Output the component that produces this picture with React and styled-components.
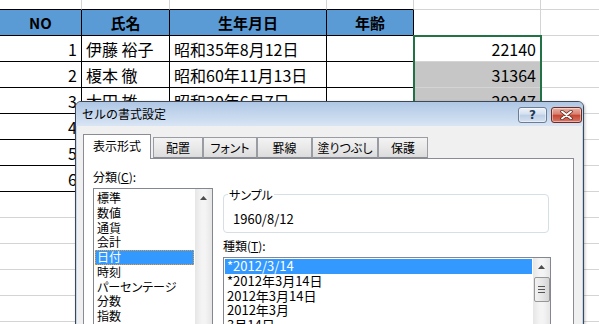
import React from "react";
import styled, { createGlobalStyle } from "styled-components";

const GlobalStyle = createGlobalStyle`
  html, body { margin: 0; padding: 0; background: #fff; }
  body { font-family: "Noto Sans CJK JP", "Noto Sans", sans-serif; }
`;

const Screen = styled.div`
  position: relative;
  width: 599px;
  height: 324px;
  overflow: hidden;
  background: #fff;
`;

const Sheet = styled.div`
  display: flex;
  flex-direction: column;
`;

const Row = styled.div`
  display: flex;
  flex: none;
  height: ${(p) => p.$h || 26}px;
`;

const Cell = styled.div`
  box-sizing: border-box;
  flex: none;
  width: ${(p) => p.$w}px;
  height: 100%;
  border-right: 1px solid ${(p) => p.$rc || "#d4d4d4"};
  border-bottom: 1px solid ${(p) => p.$bc || "#d4d4d4"};
  background: ${(p) => p.$bg || "#fff"};
  display: flex;
  align-items: center;
  justify-content: ${(p) =>
    p.$align === "right" ? "flex-end" : p.$align === "center" ? "center" : "flex-start"};
  padding: 0 4px;
  font-size: ${(p) => (p.$head ? 15 : 16)}px;
  font-weight: ${(p) => (p.$head ? 700 : 400)};
  color: #000;
  white-space: nowrap;
  overflow: visible;
`;

const Selection = styled.div`
  position: absolute;
  left: 413px;
  top: 35px;
  width: 129px;
  height: 158px;
  box-sizing: border-box;
  border: 2px solid #217346;
  pointer-events: none;
`;

/* dialog */

const Dialog = styled.div`
  position: absolute;
  left: 75px;
  top: 101px;
  width: 509px;
  height: 262px;
  box-sizing: border-box;
  border: 1px solid #3d4856;
  border-radius: 6px 6px 0 0;
  background: #c3d6ec;
  display: flex;
  flex-direction: column;
  box-shadow: 1px 1px 3px rgba(0, 0, 0, 0.25);
`;

const TitleBar = styled.div`
  flex: none;
  height: 24px;
  display: flex;
  align-items: flex-start;
  padding: 0 1px 0 6px;
  border-radius: 5px 5px 0 0;
  background: linear-gradient(#afc7e5, #d8e5f4);
`;

const Title = styled.div`
  flex: 1;
  font-size: 12px;
  line-height: 24px;
  color: #000;
`;

const TitleButton = styled.div`
  box-sizing: border-box;
  margin-top: 5px;
  margin-left: ${(p) => (p.$close ? 4 : 0)}px;
  width: ${(p) => (p.$close ? 31 : 29)}px;
  height: 16px;
  border-radius: 3px;
  border: 1px solid ${(p) => (p.$close ? "#6e2b22" : "#6b7c93")};
  background: ${(p) =>
    p.$close
      ? "linear-gradient(#eab0a3, #d9806f 45%, #c4442f 50%, #d7786a)"
      : "linear-gradient(#eef3fa, #d3e0ef 45%, #bccee6 50%, #d5e1f0)"};
  box-shadow: inset 0 0 0 1px rgba(255, 255, 255, 0.45);
  display: flex;
  align-items: center;
  justify-content: center;
  font-family: "DejaVu Sans", sans-serif;
  font-weight: 700;
  font-size: 12px;
  color: #243a56;
`;

const Body = styled.div`
  flex: 1;
  margin: 0 1px;
  background: #f0f0f0;
  padding: 8px 8px 0 6px;
  display: flex;
  flex-direction: column;
  font-size: 12px;
  font-feature-settings: "palt";
  color: #000;
`;

const Tabs = styled.div`
  display: flex;
  align-items: flex-end;
  height: 24px;
  flex: none;
  position: relative;
  z-index: 1;
`;

const Tab = styled.div`
  box-sizing: border-box;
  flex: none;
  width: ${(p) => p.$w}px;
  height: ${(p) => (p.$active ? 25 : 21)}px;
  margin-bottom: ${(p) => (p.$active ? -1 : 0)}px;
  margin-right: ${(p) => (p.$active ? 2 : 0)}px;
  border: 1px solid ${(p) => (p.$active ? "#898c95" : "#9a9ca3")};
  border-bottom: ${(p) => (p.$active ? "none" : "1px solid #898c95")};
  background: ${(p) => (p.$active ? "#fff" : "linear-gradient(#f3f3f3, #e9e9e9 50%, #dcdcdc)")};
  display: flex;
  align-items: center;
  justify-content: center;
  padding-bottom: ${(p) => (p.$active ? 3 : 0)}px;
  font-size: 12px;
  white-space: nowrap;
`;

const Panel = styled.div`
  flex: 1;
  background: #fff;
  border: 1px solid #898c95;
  padding: 10px 0 0 9px;
  display: flex;
  gap: 10px;
`;

const Column = styled.div`
  display: flex;
  flex-direction: column;
  width: ${(p) => p.$w}px;
`;

const Label = styled.div`
  line-height: 15px;
  height: 15px;
  margin-top: ${(p) => p.$mt || 0}px;
`;

const Sample = styled.fieldset`
  margin: 18px 2px 0 0;
  padding: 0 4px 6px 9px;
  border: 1px solid #d5dfe5;
  border-radius: 4px;
  min-width: 0;
`;

const Legend = styled.legend`
  padding: 0 1px;
  margin-left: -5px;
  line-height: 15px;
`;

const SampleValue = styled.div`
  line-height: 15px;
  margin-top: 9px;
  font-size: 13px;
`;

const ListBox = styled.div`
  box-sizing: border-box;
  margin-top: 4px;
  height: 140px;
  border: 1px solid #828790;
  background: #fff;
  display: flex;
`;

const Items = styled.div`
  flex: 1;
  padding-top: ${(p) => p.$pt}px;
  font-size: ${(p) => p.$fs || 12}px;
`;

const Item = styled.div`
  margin: 0 1px;
  padding-left: 2px;
  height: 14.75px;
  line-height: 14.75px;
  white-space: nowrap;
  box-sizing: border-box;
  background: ${(p) => (p.$selected ? "#3399ff" : "transparent")};
  color: ${(p) => (p.$selected ? "#fff" : "#000")};
  outline: ${(p) => (p.$focus ? "1px dotted #ff9a1a" : "none")};
  outline-offset: -1px;
`;

const ScrollBar = styled.div`
  flex: none;
  width: 17px;
  background: linear-gradient(90deg, #e6e6e6, #f4f4f4 40%, #f4f4f4 60%, #e6e6e6);
  display: flex;
  flex-direction: column;
  align-items: center;
`;

const Arrow = styled.div`
  height: 17px;
  display: flex;
  align-items: center;
  justify-content: center;
`;

const Thumb = styled.div`
  box-sizing: border-box;
  margin-top: 2px;
  width: 16px;
  height: 25px;
  border: 1px solid #979797;
  border-radius: 2px;
  background: linear-gradient(90deg, #f2f2f2, #e6e6e6 50%, #d5d5d5);
  display: flex;
  flex-direction: column;
  align-items: center;
  justify-content: center;
  gap: 2px;
`;

const Grip = styled.div`
  width: 7px;
  height: 1px;
  background: #555;
`;

const cols = [82, 88, 157, 87, 127, 100];
const BLACK = "#000";

const people = [
  { no: 1, name: "伊藤 裕子", birth: "昭和35年8月12日", serial: "22140" },
  { no: 2, name: "榎本 徹", birth: "昭和60年11月13日", serial: "31364" },
  { no: 3, name: "太田 雄一", birth: "昭和30年6月7日", serial: "20247" },
  { no: 4, name: "", birth: "", serial: "" },
  { no: 5, name: "", birth: "", serial: "" },
  { no: 6, name: "", birth: "", serial: "" },
];

const headers = ["NO", "氏名", "生年月日", "年齢"];

const tabs = [
  { label: "表示形式", w: 68, active: true },
  { label: "配置", w: 50 },
  { label: "フォント", w: 54 },
  { label: "罫線", w: 55 },
  { label: "塗りつぶし", w: 66 },
  { label: "保護", w: 50 },
];

const categories = ["標準", "数値", "通貨", "会計", "日付", "時刻", "パーセンテージ", "分数", "指数"];
const kinds = ["*2012/3/14", "*2012年3月14日", "2012年3月14日", "2012年3月", "3月14日"];

function UpArrow() {
  return (
    <Arrow>
      <svg width="7" height="4" viewBox="0 0 7 4">
        <polygon points="0,4 7,4 3.5,0" fill="#4d4d4d" />
      </svg>
    </Arrow>
  );
}

function Spreadsheet() {
  return (
    <Sheet>
      <Row $h={10}>
        {cols.map((w, i) => (
          <Cell key={i} $w={w} $bc={i < 4 ? BLACK : undefined} />
        ))}
      </Row>
      <Row>
        {cols.map((w, i) =>
          i < 4 ? (
            <Cell key={i} $w={w} $head $align="center" $bg="#5b9bd5" $rc={BLACK} $bc={BLACK}>
              {headers[i]}
            </Cell>
          ) : (
            <Cell key={i} $w={w} />
          )
        )}
      </Row>
      {people.map((p, r) => (
        <Row key={p.no}>
          <Cell $w={cols[0]} $align="right" $rc={BLACK} $bc={BLACK}>{p.no}</Cell>
          <Cell $w={cols[1]} $rc={BLACK} $bc={BLACK}>{p.name}</Cell>
          <Cell $w={cols[2]} $rc={BLACK} $bc={BLACK}>{p.birth}</Cell>
          <Cell $w={cols[3]} $rc={BLACK} $bc={BLACK} />
          <Cell $w={cols[4]} $align="right" $bg={r > 0 ? "#c6c6c6" : "#fff"}>{p.serial}</Cell>
          <Cell $w={cols[5]} />
        </Row>
      ))}
      {Array.from({ length: 6 }).map((_, r) => (
        <Row key={"e" + r}>
          {cols.map((w, i) => (
            <Cell key={i} $w={w} />
          ))}
        </Row>
      ))}
    </Sheet>
  );
}

function FormatDialog() {
  return (
    <Dialog>
      <TitleBar>
        <Title>セルの書式設定</Title>
        <TitleButton>?</TitleButton>
        <TitleButton $close>
          <svg width="13" height="10" viewBox="0 0 13 10">
            <path d="M2 1.5 L11 8.5 M11 1.5 L2 8.5" stroke="#5a2019" strokeWidth="3.4" strokeLinecap="round" />
            <path d="M2 1.5 L11 8.5 M11 1.5 L2 8.5" stroke="#fff" strokeWidth="2" strokeLinecap="round" />
          </svg>
        </TitleButton>
      </TitleBar>
      <Body>
        <Tabs>
          {tabs.map((t) => (
            <Tab key={t.label} $w={t.w} $active={t.active}>
              {t.label}
            </Tab>
          ))}
        </Tabs>
        <Panel>
          <Column $w={120}>
            <Label>
              分類(<u>C</u>):
            </Label>
            <ListBox>
              <Items $pt={2}>
                {categories.map((c) => (
                  <Item key={c} $selected={c === "日付"} $focus={c === "日付"}>
                    {c}
                  </Item>
                ))}
              </Items>
              <ScrollBar>
                <UpArrow />
              </ScrollBar>
            </ListBox>
          </Column>
          <Column $w={328}>
            <Sample>
              <Legend>サンプル</Legend>
              <SampleValue>1960/8/12</SampleValue>
            </Sample>
            <Label $mt={5}>
              種類(<u>T</u>):
            </Label>
            <ListBox>
              <Items $pt={1} $fs={13}>
                {kinds.map((k, i) => (
                  <Item key={k} $selected={i === 0}>
                    {k}
                  </Item>
                ))}
              </Items>
              <ScrollBar>
                <UpArrow />
                <Thumb>
                  <Grip />
                  <Grip />
                  <Grip />
                </Thumb>
              </ScrollBar>
            </ListBox>
          </Column>
        </Panel>
      </Body>
    </Dialog>
  );
}

export default function App() {
  return (
    <Screen>
      <GlobalStyle />
      <Spreadsheet />
      <Selection />
      <FormatDialog />
    </Screen>
  );
}
